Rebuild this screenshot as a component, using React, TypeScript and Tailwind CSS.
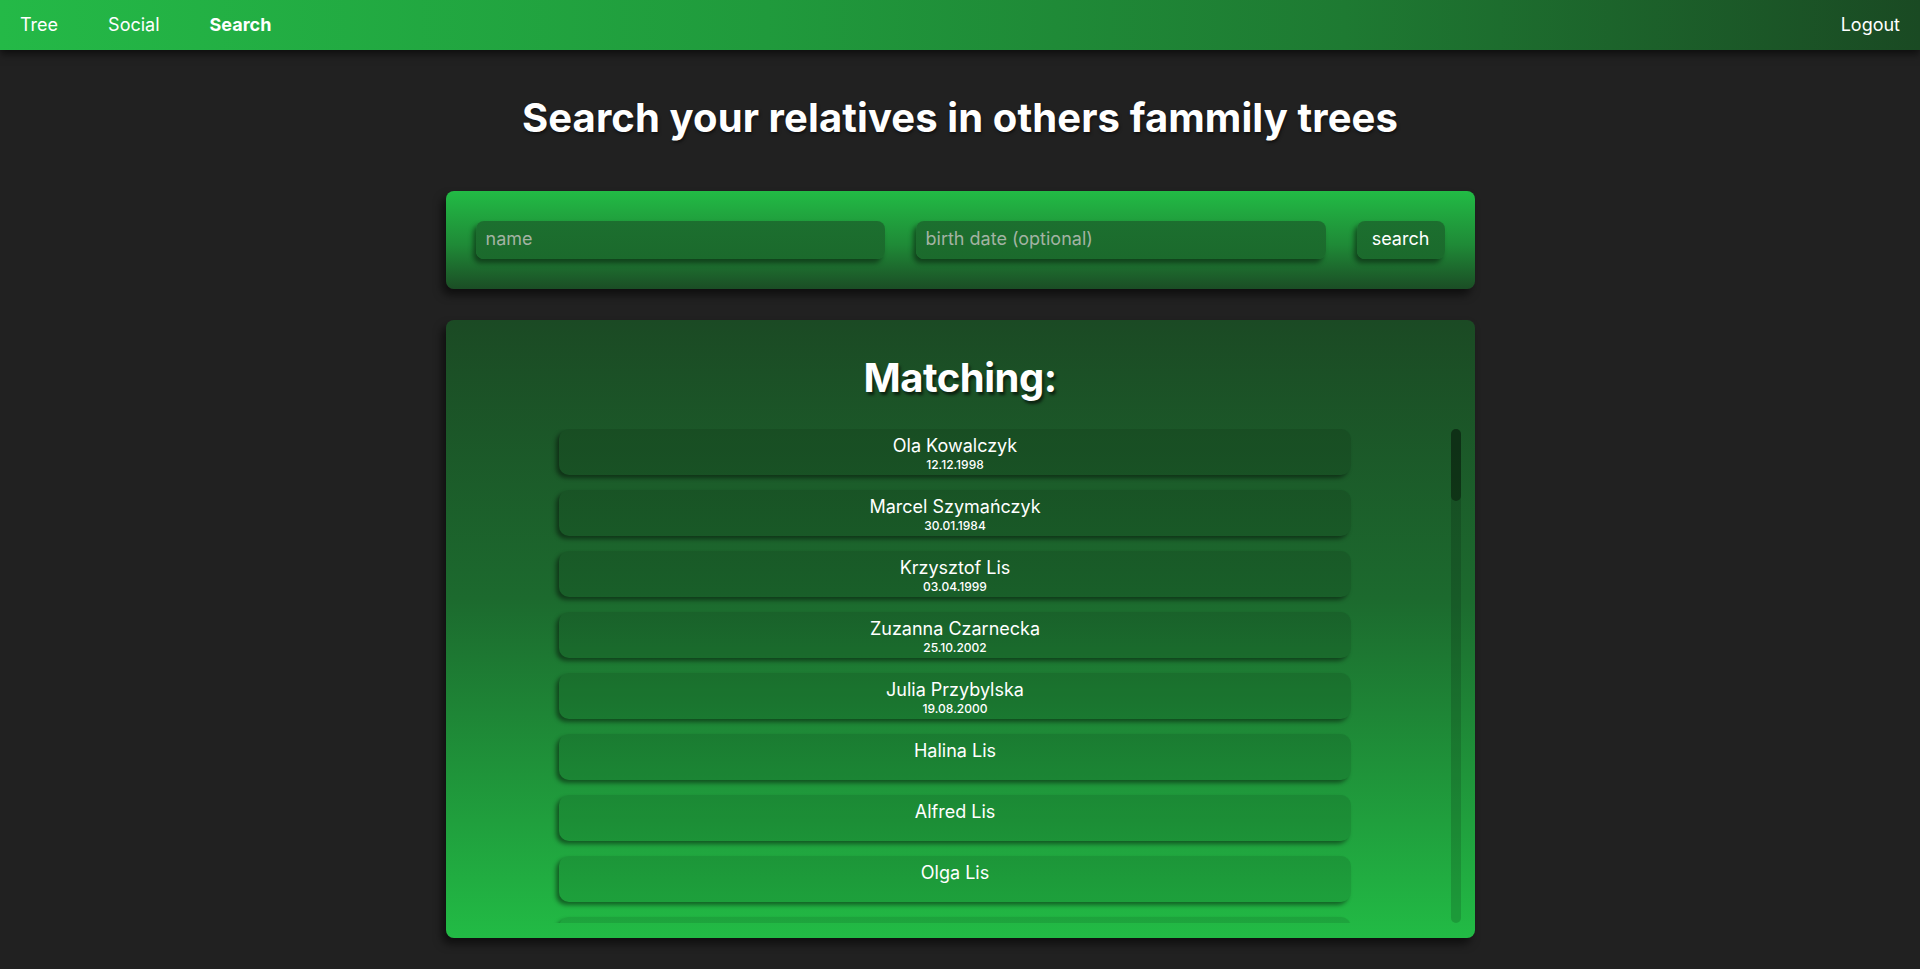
import React from 'react';

type Person = { name: string; born?: string };

const people: Person[] = [
  { name: 'Ola Kowalczyk', born: '12.12.1998' },
  { name: 'Marcel Szymańczyk', born: '30.01.1984' },
  { name: 'Krzysztof Lis', born: '03.04.1999' },
  { name: 'Zuzanna Czarnecka', born: '25.10.2002' },
  { name: 'Julia Przybylska', born: '19.08.2000' },
  { name: 'Halina Lis' },
  { name: 'Alfred Lis' },
  { name: 'Olga Lis' },
  { name: 'Jan Lis' },
  { name: 'Anna Nowak', born: '14.02.1975' },
];

const font = { fontFamily: 'Inter, "Noto Sans", sans-serif' };

const field =
  'h-[38px] rounded-lg px-[10px] pb-[3px] text-[18px] text-white placeholder:text-[#a3b3a3] bg-[linear-gradient(180deg,#1c6f2f,#1b6a2c)] shadow-[-3px_4px_5px_rgba(0,0,0,0.45)] outline-none';

const App: React.FC = () => {
  return (
    <div className="min-h-[969px] bg-[#212121] text-white" style={font}>
      <nav className="h-[50px] flex items-center justify-between px-5 pb-[2px] bg-[linear-gradient(90deg,#24b947_0%,#209a3c_40%,#1e7a32_70%,#1a4a23_100%)] shadow-[0_4px_8px_rgba(0,0,0,0.6)] relative z-10">
        <div className="flex items-center gap-[50px] text-[18px]">
          <a className="cursor-pointer">Tree</a>
          <a className="cursor-pointer">Social</a>
          <a className="cursor-pointer font-bold">Search</a>
        </div>
        <a className="text-[18px] cursor-pointer">Logout</a>
      </nav>

      <h1 className="mt-[44px] text-center text-[40px] leading-[48px] font-bold tracking-[0.1px] [text-shadow:1px_2px_3px_rgba(0,0,0,0.5)]">
        Search your relatives in others fammily trees
      </h1>

      <div className="w-[1029px] mx-auto mt-[49px] flex flex-col gap-[31px] pb-[31px]">
        <form
          className="h-[98px] rounded-lg p-[30px] flex gap-[31px] bg-[linear-gradient(180deg,#22bb45_0%,#1f8a37_55%,#1b4d25_100%)] shadow-[-4px_6px_8px_rgba(0,0,0,0.55)]"
          onSubmit={(e) => e.preventDefault()}
        >
          <input placeholder="name" className={`w-[409px] ${field}`} />
          <input placeholder="birth date (optional)" className={`w-[410px] ${field}`} />
          <button className="w-[88px] h-[38px] pb-[3px] rounded-lg text-[18px] text-white bg-[linear-gradient(180deg,#1c6f2f,#1b6a2c)] shadow-[-3px_4px_5px_rgba(0,0,0,0.45)]">
            search
          </button>
        </form>

        <section className="h-[618px] rounded-lg pt-[32px] pb-[15px] px-[14px] flex flex-col bg-[linear-gradient(180deg,#1b4a24_0%,#1c6a2e_45%,#22bb45_100%)] shadow-[-4px_6px_8px_rgba(0,0,0,0.55)]">
          <h2 className="text-center text-[40px] leading-[52px] font-bold tracking-[-0.5px] mb-[25px] [text-shadow:2px_3px_3px_rgba(0,0,0,0.6)]">
            Matching:
          </h2>
          <div className="h-[494px] flex">
            <div className="flex-1 overflow-y-auto [scrollbar-width:none] [&::-webkit-scrollbar]:hidden">
              {people.map((p, i) => (
                <div
                  key={i}
                  className="w-[80%] mx-auto h-[46px] mb-[15px] rounded-[10px] pt-[6px] text-center bg-black/10 shadow-[-3px_3px_4px_rgba(0,0,0,0.45)] cursor-pointer"
                >
                  <div className="text-[18px] leading-[22px]">{p.name}</div>
                  {p.born && <div className="text-[12px] leading-[15px] font-medium">{p.born}</div>}
                </div>
              ))}
            </div>
            <div className="w-[10px] h-full rounded-full bg-black/15">
              <div className="h-[72px] rounded-full bg-black/35" />
            </div>
          </div>
        </section>
      </div>
    </div>
  );
};

export default App;
